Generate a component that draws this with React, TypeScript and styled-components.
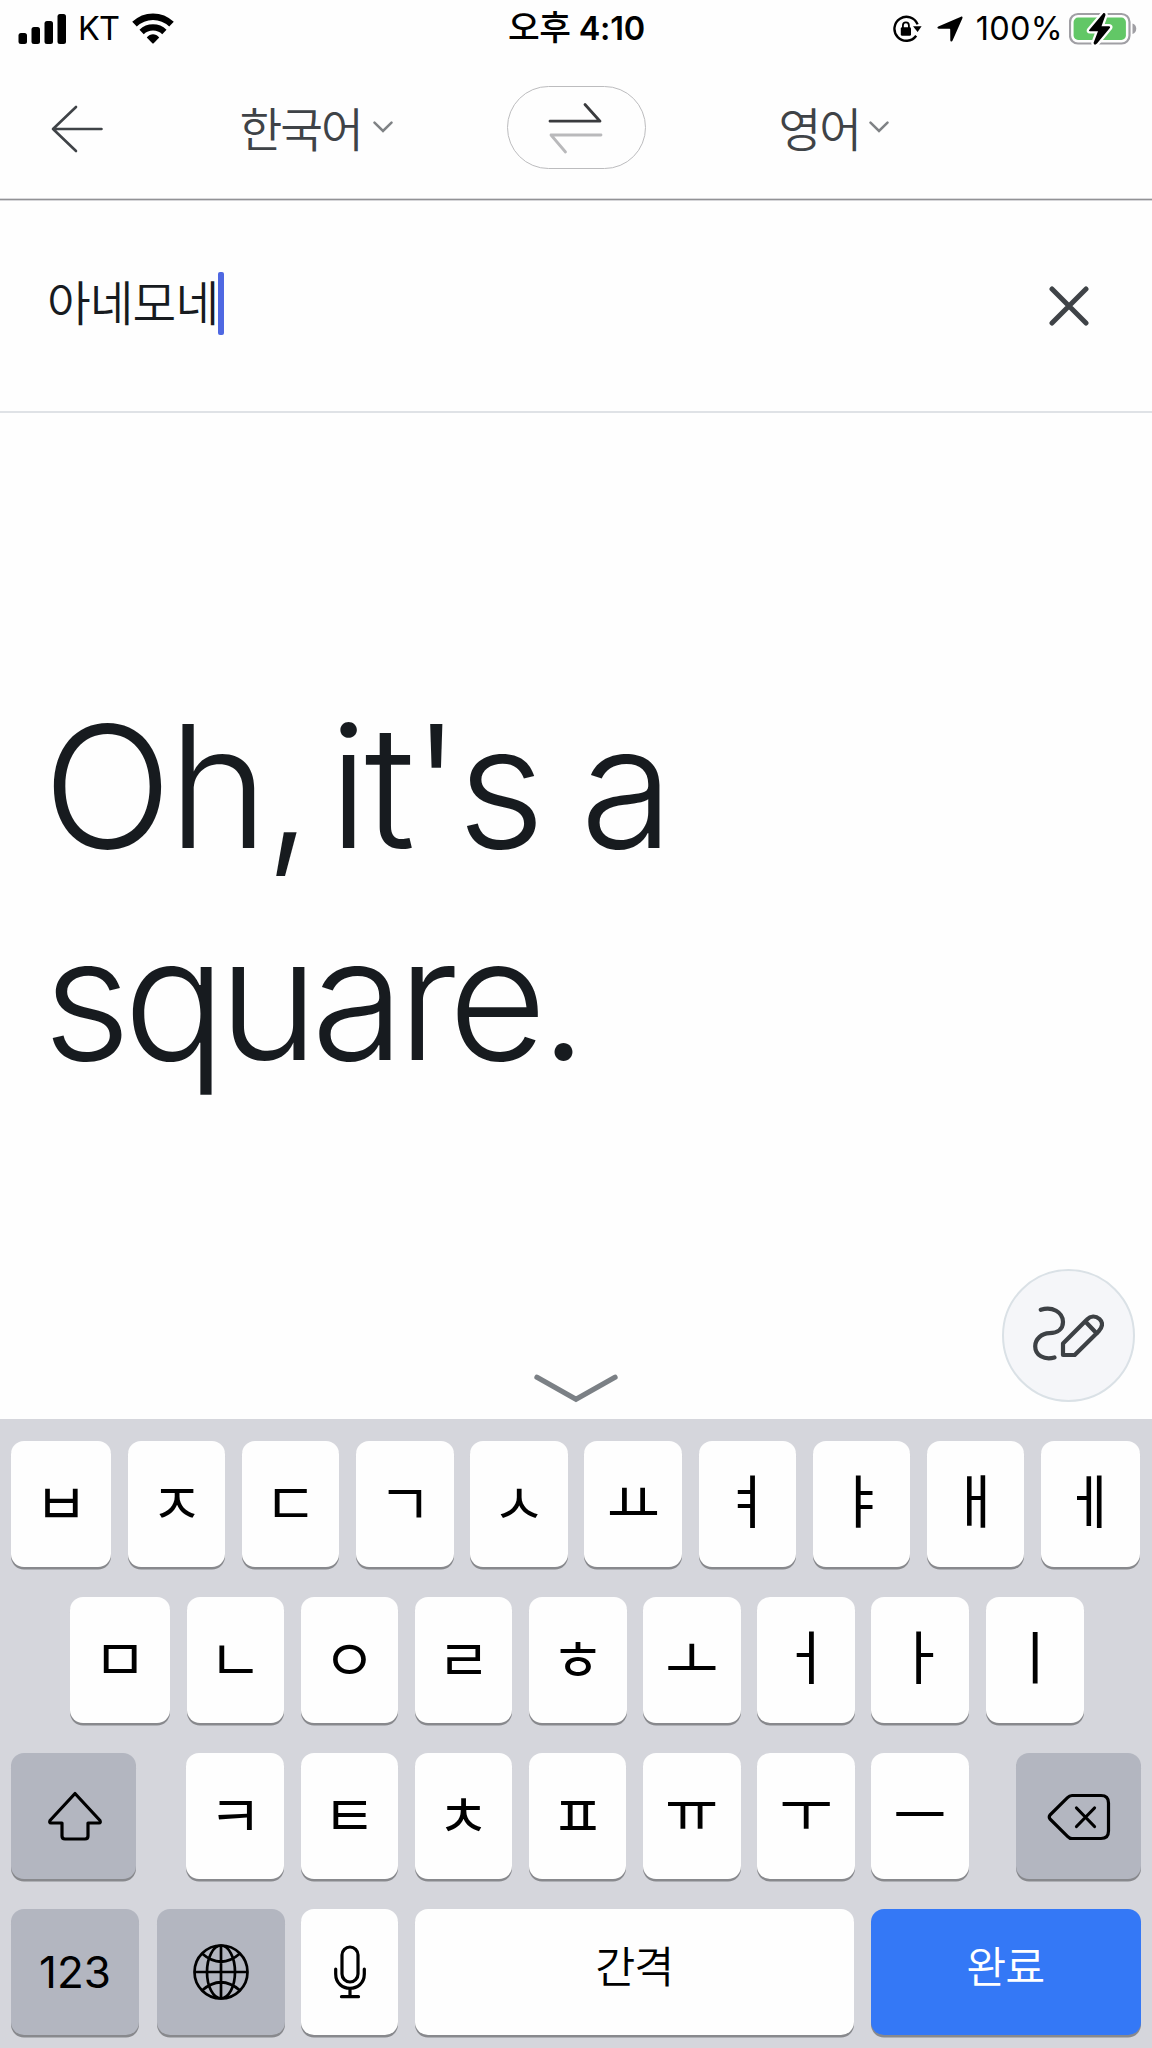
import React from "react";
import styled, { createGlobalStyle } from "styled-components";

const GlobalStyle = createGlobalStyle`
  *, *::before, *::after { box-sizing: border-box; }
  body { margin: 0; background: #fefefe; }
  button { border: 0; padding: 0; margin: 0; background: none; font: inherit; color: inherit; }
  svg { display: block; flex: none; }
`;

const Screen = styled.div`
  width: 1152px;
  height: 2048px;
  display: flex;
  flex-direction: column;
  background: #fefefe;
  color: #171b1f;
  font-family: Inter, "Noto Sans CJK KR", sans-serif;
  overflow: hidden;
`;

const StatusBar = styled.header`
  height: 58px;
  display: grid;
  grid-template-columns: 1fr auto 1fr;
  align-items: center;
  padding: 0 15px 0 18px;
  color: #000;
  font-size: 32.5px;
  line-height: 56px;
`;

const StatusGroup = styled.div<{ $end?: boolean }>`
  display: flex;
  align-items: center;
  justify-content: ${(p) => (p.$end ? "flex-end" : "flex-start")};
`;

const Carrier = styled.span`
  margin: 0 12px 0 11px;
  padding-bottom: 1px;
  letter-spacing: -0.8px;
`;

const Clock = styled.span`
  padding: 0 2px 1px 0;
  font-weight: 600;
  letter-spacing: -0.2px;
`;

const Meridiem = styled.span`
  font-family: "Noto Sans CJK KR", sans-serif;
  font-size: 34.5px;
  font-weight: 500;
  line-height: 50px;
  letter-spacing: -0.4px;
`;

const Percent = styled.span`
  margin: 0 6px 0 12.5px;
  padding-bottom: 1px;
  letter-spacing: 0.3px;
`;

const RotationLockSlot = styled.span`
  margin-right: 15.5px;
`;

const LanguageBar = styled.nav`
  height: 142px;
  display: grid;
  grid-template-columns: 242px 264.5px 139px 135.5px 1fr;
  align-items: center;
  padding-bottom: 2px;
  border-bottom: 1px solid #929295;
  box-shadow: 0 1px 0 #d6d6d9, inset 0 -1px 0 #d9d9dc;
`;

const BackButton = styled.button`
  padding: 3px 0 0 50px;
  text-align: left;
`;

const Language = styled.button<{ $column: number; $gap: number }>`
  grid-column: ${(p) => p.$column};
  display: flex;
  align-items: center;
  gap: ${(p) => p.$gap}px;
  margin-left: -2.5px;
  padding-bottom: 2px;
  color: #3f4347;
  font-family: "Noto Sans CJK KR", sans-serif;
  font-size: 46.5px;
  font-weight: 350;
  line-height: 60px;
  letter-spacing: -2px;
`;

const SwapButton = styled.button`
  width: 139px;
  height: 83px;
  display: flex;
  align-items: center;
  justify-content: center;
  border: 1.5px solid #bcbcbe;
  border-radius: 42px;
`;

const SourceRow = styled.section`
  height: 213px;
  display: flex;
  align-items: center;
  justify-content: space-between;
  padding: 0 63.5px 0 47px;
  border-bottom: 2px solid #dfe2e6;
`;

const SourceField = styled.div`
  display: flex;
  align-items: center;
  padding-bottom: 4px;
`;

const SourceText = styled.span`
  padding-bottom: 6px;
  font-family: "Noto Sans CJK KR", sans-serif;
  font-size: 47.5px;
  font-weight: 350;
  line-height: 54px;
  letter-spacing: -0.9px;
`;

const Caret = styled.span`
  width: 6px;
  height: 63px;
  border-radius: 2px;
  background: #4f68e2;
`;

const ResultPane = styled.main`
  position: relative;
  flex: 1;
  display: flex;
  flex-direction: column;
  justify-content: space-between;
  padding: 267px 0 16px 43px;
`;

const Translation = styled.p`
  margin: 0;
  width: 760px;
  font-size: 170px;
  font-weight: 300;
  line-height: 212px;
`;

const Phrase = styled.span<{ $tracking: number; $space?: number }>`
  letter-spacing: ${(p) => p.$tracking}px;
  word-spacing: ${(p) => p.$space ?? 0}px;
`;

const CollapseButton = styled.button`
  align-self: center;
  margin-right: 43px;
`;

const HandwriteButton = styled.button`
  position: absolute;
  right: 17px;
  bottom: 17px;
  width: 133px;
  height: 133px;
  display: flex;
  align-items: center;
  justify-content: center;
  padding: 0 1px 4px 0;
  border: 2.5px solid #dae1e6;
  border-radius: 50%;
  background: #f5f6f9;
`;

const Keyboard = styled.section`
  height: 629px;
  display: flex;
  flex-direction: column;
  gap: 30px;
  padding: 22px 11px 0;
  background: #d5d6dc;
`;

const KeyRow = styled.div<{ $inset?: number }>`
  height: 126px;
  display: flex;
  gap: 16.65px;
  padding-left: ${(p) => p.$inset ?? 0}px;
`;

type Tone = "light" | "dark" | "primary";
const toneColor: Record<Tone, string> = { light: "#fefefe", dark: "#b3b6c0", primary: "#3478f6" };

const Key = styled.button<{ $width?: number; $tone?: Tone; $before?: number; $after?: number }>`
  flex: none;
  width: ${(p) => p.$width ?? 97.5}px;
  height: 126px;
  margin-left: ${(p) => p.$before ?? 0}px;
  margin-right: ${(p) => p.$after ?? 0}px;
  display: flex;
  align-items: center;
  justify-content: center;
  border-radius: 13px;
  background: ${(p) => toneColor[p.$tone ?? "light"]};
  box-shadow: 0 2.5px 0 #88898d;
  color: ${(p) => (p.$tone === "primary" ? "#fff" : "#000")};
`;

const Jamo = styled.span<{ $lift: number }>`
  padding-bottom: ${(p) => p.$lift}px;
  font-family: "Noto Sans CJK KR", sans-serif;
  font-size: 58px;
  font-weight: 400;
  line-height: 60px;
`;

const Word = styled.span`
  font-family: "Noto Sans CJK KR", sans-serif;
  font-size: 43.5px;
  font-weight: 350;
  line-height: 60px;
  letter-spacing: -1px;
  padding: 0 1px 14px 0;
`;

const Digits = styled.span`
  font-size: 44px;
  font-weight: 400;
  line-height: 60px;
  padding-bottom: 1px;
`;

const SignalIcon = () => (
  <svg width="49" height="32" viewBox="0 0 49 32">
    <rect x="0.5" y="20" width="8.5" height="11" rx="2.5" />
    <rect x="13.5" y="14" width="8.5" height="17" rx="2.5" />
    <rect x="26.5" y="8" width="8.5" height="23" rx="2.5" />
    <rect x="39.5" y="1" width="8.5" height="30" rx="2.5" />
  </svg>
);

const WifiIcon = () => (
  <svg width="44" height="33" viewBox="-1 0 44 33">
    <path d="M2.5 11.2 C13 1.2 29 1.2 39.5 11.2" fill="none" stroke="#000" strokeWidth="6.6" />
    <path d="M9.6 19 C16 12.9 26 12.9 32.4 19" fill="none" stroke="#000" strokeWidth="6.2" />
    <path d="M14.8 24.4 C18.5 20.3 23.5 20.3 27.2 24.4 L21.7 30.2 Q21 30.8 20.3 30.2 Z" />
  </svg>
);

const RotationLockIcon = () => (
  <svg width="30" height="28" viewBox="0 0 30 28">
    <path d="M25.6 9.4 A12 12 0 1 0 24.2 20.8" fill="none" stroke="#000" strokeWidth="2.4" />
    <path d="M21 11.3 h8.6 l-4 5.6 z" />
    <rect x="8.8" y="12.2" width="10.2" height="8.6" rx="1.4" />
    <path d="M10.9 13 v-2.6 a3 3 0 0 1 6 0 V13" fill="none" stroke="#000" strokeWidth="1.8" />
  </svg>
);

const LocationIcon = () => (
  <svg width="26" height="26" viewBox="0 0 26 26">
    <path d="M24 0.7 C25 0.3 25.9 1.1 25.4 2.2 L15.6 24.6 C15 26 13.4 25.7 13.3 24.2 L13.2 13.4 C13.2 13 13 12.8 12.6 12.8 L1.8 12.7 C0.3 12.6 -0.1 11 1.3 10.4 Z" />
  </svg>
);

const BatteryIcon = () => (
  <svg width="68" height="34" viewBox="0 0 68 34">
    <rect x="1" y="2" width="59.5" height="29.5" rx="8" fill="none" stroke="#a09fa4" strokeWidth="2.2" />
    <path d="M63.5 11.5 C68.5 13 68.5 20.5 63.5 22 Z" fill="#a09fa4" />
    <rect x="4.6" y="5.6" width="52.3" height="22.3" rx="4.5" fill="#62c766" />
    <path d="M34.5 1 L20.2 18 Q19.5 19.2 21 19.3 H29 L24.5 31 Q25.5 34 28 31.5 L41 15.8 Q41.8 14.4 40 14.2 H32.5 L36.5 3 Q36.5 0.5 34.5 1 Z" fill="#000" stroke="#fefefe" strokeWidth="4.6" paintOrder="stroke" strokeLinejoin="round" />
  </svg>
);

const BackIcon = () => (
  <svg width="54" height="50" viewBox="0 0 54 50" fill="none" stroke="#3f4347" strokeWidth="2.6" strokeLinecap="round" strokeLinejoin="round">
    <path d="M51.5 25 H3 M26 3 L3 25 L26 47" />
  </svg>
);

const ChevronIcon = () => (
  <svg width="20" height="12" viewBox="0 0 20 12" fill="none" stroke="#7f8285" strokeWidth="2.5" strokeLinecap="round">
    <path d="M1.5 1.6 L10 10 L18.5 1.6" />
  </svg>
);

const SwapIcon = () => (
  <svg width="56" height="52" viewBox="0 0 56 52" fill="none" strokeWidth="2.8" strokeLinecap="round" strokeLinejoin="round">
    <path d="M2 19.2 H52 L37 2.5" stroke="#3a3b3e" />
    <path d="M53 33 H3 L17.5 50" stroke="#b9b9bb" />
  </svg>
);

const ClearIcon = () => (
  <svg width="40" height="40" viewBox="0 0 40 40" stroke="#3f4347" strokeWidth="5" strokeLinecap="round">
    <path d="M3 3 L37 37 M37 3 L3 37" />
  </svg>
);

const CollapseIcon = () => (
  <svg width="86" height="30" viewBox="0 0 86 30" fill="none" stroke="#7b8085" strokeWidth="5.3" strokeLinecap="round">
    <path d="M4 4.2 L43 26.3 L82 4.2" />
  </svg>
);

const HandwriteIcon = () => (
  <svg width="71" height="55" viewBox="0 0 71 55" fill="none" stroke="#3d4145" strokeWidth="4.2" strokeLinecap="round" strokeLinejoin="round">
    <path d="M7.8 3.8 C19 0 30 6 30 16 C30 23 24.5 27 16.5 27.2 C8.5 27.5 2.2 33 2.2 40.2 C2.2 49 11 54.5 21.5 51.5" />
    <path d="M30 49 H41.7 L65.5 25.5 C70 20.8 70 16.2 66.5 13 C62.5 9.5 57.5 9.8 54 13.5 L30 37.5 Z M52.3 15.5 L63.8 27.5" />
  </svg>
);

const ShiftIcon = () => (
  <svg width="59" height="52" viewBox="-3 -1 59 52" fill="none" stroke="#000" strokeWidth="3.2" strokeLinejoin="round">
    <path d="M28 2.5 L53 29.5 Q54 32 52 32 H41 V45 Q41 48 38 48 H18 Q15 48 15 45 V32 H4 Q2 32 3 29.5 Z" />
  </svg>
);

const DeleteIcon = () => (
  <svg width="66" height="50" viewBox="-2 -2 66 50" fill="none" stroke="#000" strokeWidth="3.2" strokeLinecap="round" strokeLinejoin="round">
    <path d="M25 2.5 H54 Q61.5 2.5 61.5 10 V38 Q61.5 45.5 54 45.5 H25 Q22.5 45.5 20.5 43.3 L3 26 Q1.5 24 3 22 L20.5 4.7 Q22.5 2.5 25 2.5 Z" />
    <path d="M29.5 15 L47.5 33.5 M47.5 15 L29.5 33.5" />
  </svg>
);

const GlobeIcon = () => (
  <svg width="56" height="56" viewBox="0 0 56 56" fill="none" stroke="#000" strokeWidth="2.7">
    <circle cx="28" cy="28" r="26.5" />
    <ellipse cx="28" cy="28" rx="14" ry="26.5" />
    <path d="M28 1.4 V54.6 M1.4 28 H54.6 M9 9.5 Q28 26 47 9.5 M9 46.5 Q28 30 47 46.5" />
  </svg>
);

const MicIcon = () => (
  <svg width="32" height="54" viewBox="0 0 32 54" fill="none" stroke="#000" strokeWidth="3.2" strokeLinecap="round">
    <rect x="8" y="2" width="16" height="35" rx="8" />
    <path d="M1.7 24 V29 C1.7 48 30.3 48 30.3 29 V24 M16 43.5 V51.5 M7.5 51.7 H24.5" />
  </svg>
);

const firstRow = ["ㅂ", "ㅈ", "ㄷ", "ㄱ", "ㅅ", "ㅛ", "ㅕ", "ㅑ", "ㅐ", "ㅔ"];
const secondRow = ["ㅁ", "ㄴ", "ㅇ", "ㄹ", "ㅎ", "ㅗ", "ㅓ", "ㅏ", "ㅣ"];
const thirdRow = ["ㅋ", "ㅌ", "ㅊ", "ㅍ", "ㅠ", "ㅜ", "ㅡ"];

const edgeWidth = (i: number, count: number) => (i === 0 ? 100.2 : i === count - 1 ? 98.7 : 97.5);
const liftOf = (c: string) => {
  if ("ㅠㅜ".includes(c)) return 19;
  if ("ㅕㅑㅐㅔㅓㅏㅣ".includes(c)) return 12;
  return 9;
};

export default function App() {
  return (
    <>
      <GlobalStyle />
      <Screen>
        <StatusBar>
          <StatusGroup>
            <SignalIcon />
            <Carrier>KT</Carrier>
            <WifiIcon />
          </StatusGroup>
          <Clock><Meridiem>오후</Meridiem> 4:10</Clock>
          <StatusGroup $end>
            <RotationLockSlot><RotationLockIcon /></RotationLockSlot>
            <LocationIcon />
            <Percent>100%</Percent>
            <BatteryIcon />
          </StatusGroup>
        </StatusBar>

        <LanguageBar>
          <BackButton aria-label="뒤로"><BackIcon /></BackButton>
          <Language $column={2} $gap={11}>한국어<ChevronIcon /></Language>
          <SwapButton aria-label="언어 전환"><SwapIcon /></SwapButton>
          <Language $column={5} $gap={9}>영어<ChevronIcon /></Language>
        </LanguageBar>

        <SourceRow>
          <SourceField><SourceText>아네모네</SourceText><Caret /></SourceField>
          <button aria-label="지우기"><ClearIcon /></button>
        </SourceRow>

        <ResultPane>
          <Translation>
            <Phrase $tracking={-3.8} $space={-24}>Oh, </Phrase>
            <Phrase $tracking={-3.8} $space={-5}>it's a </Phrase>
            <Phrase $tracking={-7.3}>square.</Phrase>
          </Translation>
          <CollapseButton aria-label="키보드 닫기"><CollapseIcon /></CollapseButton>
          <HandwriteButton aria-label="필기 입력"><HandwriteIcon /></HandwriteButton>
        </ResultPane>

        <Keyboard>
          <KeyRow>
            {firstRow.map((c, i) => (
              <Key key={c} $width={edgeWidth(i, firstRow.length)}><Jamo $lift={liftOf(c)}>{c}</Jamo></Key>
            ))}
          </KeyRow>
          <KeyRow $inset={58.8}>
            {secondRow.map((c, i) => (
              <Key key={c} $width={edgeWidth(i, secondRow.length)}><Jamo $lift={liftOf(c)}>{c}</Jamo></Key>
            ))}
          </KeyRow>
          <KeyRow>
            <Key $tone="dark" $width={125} $after={33.8}><ShiftIcon /></Key>
            {thirdRow.map((c) => (
              <Key key={c}><Jamo $lift={liftOf(c)}>{c}</Jamo></Key>
            ))}
            <Key $tone="dark" $width={124.7} $before={30.6}><DeleteIcon /></Key>
          </KeyRow>
          <KeyRow>
            <Key $tone="dark" $width={128}><Digits>123</Digits></Key>
            <Key $tone="dark" $width={128.5} $before={1.2} $after={-1.2}><GlobeIcon /></Key>
            <Key><MicIcon /></Key>
            <Key $width={439.5}><Word>간격</Word></Key>
            <Key $tone="primary" $width={269.5}><Word>완료</Word></Key>
          </KeyRow>
        </Keyboard>
      </Screen>
    </>
  );
}
